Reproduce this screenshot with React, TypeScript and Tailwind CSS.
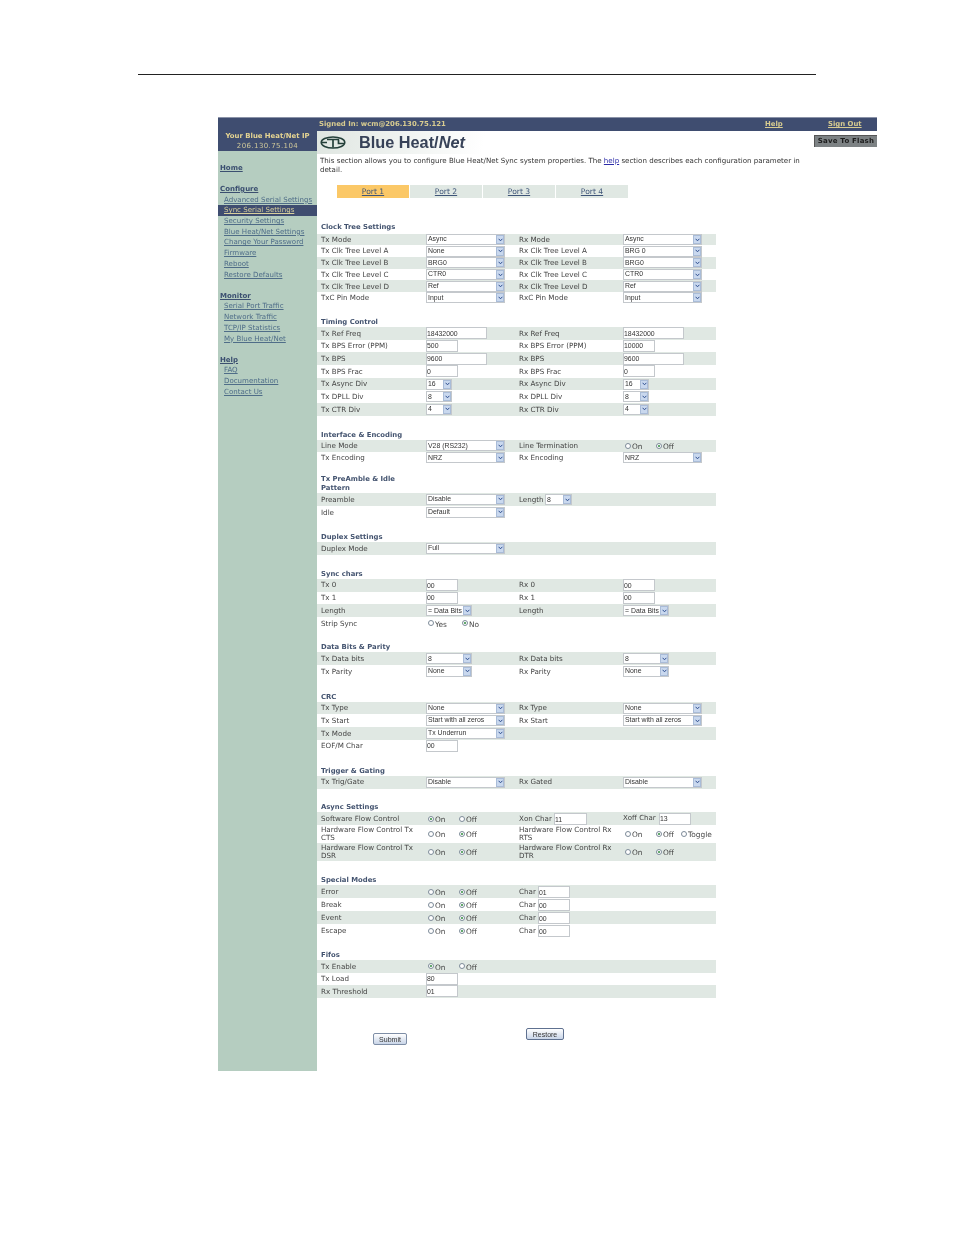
import React from 'react';

// form widgets drawn small, the page is a scanned manual
const Sel = ({ v, w = 'w-[79px]' }: { v: string; w?: string }) => (
  <div className={`${w} h-[11px] flex items-center justify-between bg-white border border-[#c4c8cc] pl-[1px] font-['Liberation_Sans',sans-serif] text-[6.9px] text-[#333] overflow-hidden shrink-0`}>
    <span className="whitespace-nowrap">{v}</span>
    <span className="w-[8px] h-[9px] shrink-0 bg-[#c9d8ee] border border-[#a9bcd8] flex items-center justify-center">
      <svg width="5" height="4" viewBox="0 0 5 4"><path d="M0.6 0.8 L2.5 2.8 L4.4 0.8" fill="none" stroke="#2f4f8f" strokeWidth="1" /></svg>
    </span>
  </div>
);

const Inp = ({ v, w = 'w-[32px]' }: { v: string; w?: string }) => (
  <input
    readOnly
    value={v}
    className={`${w} h-[12px] bg-white border border-[#c4c8cc] px-0 font-['Liberation_Sans',sans-serif] text-[6.9px] text-[#333] outline-none shrink-0`}
  />
);

const Radio = ({ label, on, w = 'w-[31px]' }: { label: string; on?: boolean; w?: string }) => (
  <span className={`${w} flex items-center shrink-0 pl-[2px]`}>
    <span className="w-[6px] h-[6px] rounded-full border border-[#7d8b99] bg-white flex items-center justify-center shrink-0">
      {on && <span className="w-[2px] h-[2px] rounded-full bg-[#2e8b3d]" />}
    </span>
    <span className="ml-[1px] mt-[2px] text-[7.4px] leading-none text-[#444]">{label}</span>
  </span>
);

const OnOff = ({ on }: { on?: boolean }) => (
  <div className="flex">
    <Radio label="On" on={on} />
    <Radio label="Off" on={!on} />
  </div>
);

type Cell = React.ReactNode;
type RowDef = [Cell, Cell?, Cell?, Cell?];

const Row = ({ r, shade, h }: { r: RowDef; shade: boolean; h: string }) => (
  <div className={`flex items-center w-[399px] ${h} ${shade ? 'bg-[#e0e8e3]' : ''}`}>
    <div className="w-[109px] pl-[4px] pr-[2px] pt-[1px] leading-[8.5px] shrink-0 text-[7.15px]">{r[0]}</div>
    <div className="w-[93px] shrink-0">{r[1]}</div>
    <div className="w-[104px] pr-[2px] pt-[1px] leading-[8.5px] shrink-0 text-[7.15px]">{r[2]}</div>
    <div className="flex-1">{r[3]}</div>
  </div>
);

const Section = ({ title, head, pb = 'pb-0', rows, hs }: { title: string; head: string; pb?: string; rows: RowDef[]; hs: string[] }) => (
  <div>
    <div className={`${head} ${pb} flex items-end pl-[4px]`}>
      <div className="w-[100px] font-bold text-[6.85px] leading-[9px] text-[#43536f]">{title}</div>
    </div>
    {rows.map((r, i) => (
      <Row key={i} r={r} shade={i % 2 === 0} h={hs[i] || hs[0]} />
    ))}
  </div>
);

const Tiny = ({ label, children, gap }: { label: string; children: React.ReactNode; gap: string }) => (
  <div className="flex items-center">
    <span className={gap}>{label}</span>
    {children}
  </div>
);

const navGroups = [
  { head: 'Home', items: [] as string[] },
  { head: 'Configure', items: ['Advanced Serial Settings', 'Sync Serial Settings', 'Security Settings', 'Blue Heat/Net Settings', 'Change Your Password', 'Firmware', 'Reboot', 'Restore Defaults'] },
  { head: 'Monitor', items: ['Serial Port Traffic', 'Network Traffic', 'TCP/IP Statistics', 'My Blue Heat/Net'] },
  { head: 'Help', items: ['FAQ', 'Documentation', 'Contact Us'] },
];

function Sidebar() {
  return (
    <div className="w-[99px] shrink-0 bg-[#b5cdc0] h-[940px]">
      <div className="h-[20px] bg-[#3f4d70] text-center">
        <div className="text-[6.9px] leading-[10px] font-bold text-[#e6d592] whitespace-nowrap">Your Blue Heat/Net IP</div>
        <div className="text-[7px] leading-[9px] tracking-[0.4px] text-[#cfc89a] pt-[1px]">206.130.75.104</div>
      </div>
      <div className="pt-[1.2px]">
        {navGroups.map((g) => (
          <div key={g.head} className="mt-[10.5px]">
            <div className="pl-[2px] text-[7px] leading-[10.7px] font-bold underline text-[#3b4f70]">{g.head}</div>
            {g.items.map((it) => (
              <div
                key={it}
                className={`pl-[6px] text-[7.05px] leading-[10.7px] underline whitespace-nowrap ${it === 'Sync Serial Settings' ? 'bg-[#3f4d70] text-[#d8cf9c]' : 'text-[#4f6d88]'}`}
              >
                {it}
              </div>
            ))}
          </div>
        ))}
      </div>
    </div>
  );
}

const Logo = () => (
  <svg width="26" height="13" viewBox="0 0 26 13" className="shrink-0">
    <ellipse cx="13" cy="6.5" rx="11.8" ry="5.6" fill="none" stroke="#24403a" strokeWidth="1.5" />
    <path d="M1.5 6.5 H7 M7 3.5 H19 M13 3.5 V11.5 M18.5 3.5 V7.5 H24.5" fill="none" stroke="#24403a" strokeWidth="1.7" />
  </svg>
);

const ports = ['Port 1', 'Port 2', 'Port 3', 'Port 4'];

export default function App() {
  const mid = 'w-[46px]';
  const tiny = 'w-[26px]';
  const wide = 'w-[61px]';
  return (
    <div className="h-[1235px] bg-white font-['DejaVu_Sans',sans-serif] text-[7px] text-[#444] blur-[0.3px]">
      <div className="pt-[74px] pl-[138px]">
        <div className="w-[678px] border-t border-[#222]" />
      </div>

      <div className="ml-[218px] mt-[42px] w-[659px]">
        {/* top bar */}
        <div className="h-[14px] bg-[#3f4d70] border-t border-[#8b93a8] flex items-center font-bold text-[6.9px] text-[#d8cc90]">
          <span className="ml-[101px] w-[446px]">Signed In: wcm@206.130.75.121</span>
          <span className="underline w-[63px]">Help</span>
          <span className="underline">Sign Out</span>
        </div>

        <div className="flex">
          <Sidebar />
          <div className="flex-1">
            {/* title */}
            <div className="h-[23px] flex items-center pl-[3px] bg-[linear-gradient(100deg,#dfe6e1_0%,#ffffff_30%)] relative">
              <Logo />
              <span className="ml-[13px] font-['Liberation_Sans',sans-serif] font-bold text-[16.3px] leading-none text-[#374258] whitespace-nowrap">
                Blue Heat/<span className="italic">Net</span>
              </span>
              <div className="absolute right-0 top-[4px] w-[63px] h-[12px] bg-[#7d8284] border-t border-l border-[#555] flex items-center justify-center font-bold text-[7px] tracking-[0.2px] text-[#1d1d1d] whitespace-nowrap">
                Save To Flash
              </div>
            </div>

            <p className="ml-[3px] mt-[1.5px] w-[490px] text-[7.09px] leading-[9px] text-[#333]">
              This section allows you to configure Blue Heat/Net Sync system properties. The <span className="underline text-[#2b2ba8]">help</span> section describes each configuration parameter in detail.
            </p>

            <div className="ml-[20px] mt-[11.5px] flex gap-px">
              {ports.map((p, i) => (
                <div key={p} className={`w-[72px] h-[13px] pt-[1px] flex items-center justify-center underline text-[7.6px] text-[#3f5578] ${i === 0 ? 'bg-[#fbc867]' : 'bg-[#e0e8e3]'}`}>
                  {p}
                </div>
              ))}
            </div>

            <Section
              title="Clock Tree Settings"
              head="h-[35.7px]"
              pb="pb-[1.5px]"
              hs={['h-[11.7px]']}
              rows={[
                ['Tx Mode', <Sel v="Async" />, 'Rx Mode', <Sel v="Async" />],
                ['Tx Clk Tree Level A', <Sel v="None" />, 'Rx Clk Tree Level A', <Sel v="BRG 0" />],
                ['Tx Clk Tree Level B', <Sel v="BRG0" />, 'Rx Clk Tree Level B', <Sel v="BRG0" />],
                ['Tx Clk Tree Level C', <Sel v="CTR0" />, 'Rx Clk Tree Level C', <Sel v="CTR0" />],
                ['Tx Clk Tree Level D', <Sel v="Ref" />, 'Rx Clk Tree Level D', <Sel v="Ref" />],
                ['TxC Pin Mode', <Sel v="Input" />, 'RxC Pin Mode', <Sel v="Input" />],
              ]}
            />
            <Section
              title="Timing Control"
              head="h-[23.1px]"
              hs={['h-[12.7px]']}
              rows={[
                ['Tx Ref Freq', <Inp v="18432000" w={wide} />, 'Rx Ref Freq', <Inp v="18432000" w={wide} />],
                ['Tx BPS Error (PPM)', <Inp v="500" />, 'Rx BPS Error (PPM)', <Inp v="10000" />],
                ['Tx BPS', <Inp v="9600" w={wide} />, 'Rx BPS', <Inp v="9600" w={wide} />],
                ['Tx BPS Frac', <Inp v="0" />, 'Rx BPS Frac', <Inp v="0" />],
                ['Tx Async Div', <Sel v="16" w={tiny} />, 'Rx Async Div', <Sel v="16" w={tiny} />],
                ['Tx DPLL Div', <Sel v="8" w={tiny} />, 'Rx DPLL Div', <Sel v="8" w={tiny} />],
                ['Tx CTR Div', <Sel v="4" w={tiny} />, 'Rx CTR Div', <Sel v="4" w={tiny} />],
              ]}
            />
            <Section
              title="Interface & Encoding"
              head="h-[24.1px]"
              hs={['h-[12px]']}
              rows={[
                ['Line Mode', <Sel v="V28 (RS232)" />, 'Line Termination', <OnOff />],
                ['Tx Encoding', <Sel v="NRZ" />, 'Rx Encoding', <Sel v="NRZ" />],
              ]}
            />
            <Section
              title="Tx PreAmble & Idle Pattern"
              head="h-[29px]"
              hs={['h-[13px]']}
              rows={[
                ['Preamble', <Sel v="Disable" />, <Tiny label="Length" gap="w-[26px]"><Sel v="8" w="w-[27px]" /></Tiny>],
                ['Idle', <Sel v="Default" />],
              ]}
            />
            <Section title="Duplex Settings" head="h-[23.3px]" hs={['h-[12.7px]']} rows={[['Duplex Mode', <Sel v="Full" />]]} />
            <Section
              title="Sync chars"
              head="h-[24px]"
              hs={['h-[12.75px]']}
              rows={[
                ['Tx 0', <Inp v="00" />, 'Rx 0', <Inp v="00" />],
                ['Tx 1', <Inp v="00" />, 'Rx 1', <Inp v="00" />],
                ['Length', <Sel v="= Data Bits" w={mid} />, 'Length', <Sel v="= Data Bits" w={mid} />],
                [
                  'Strip Sync',
                  <div className="flex">
                    <Radio label="Yes" w="w-[34px]" />
                    <Radio label="No" on />
                  </div>,
                ],
              ]}
            />
            <Section
              title="Data Bits & Parity"
              head="h-[22.7px]"
              hs={['h-[12.65px]']}
              rows={[
                ['Tx Data bits', <Sel v="8" w={mid} />, 'Rx Data bits', <Sel v="8" w={mid} />],
                ['Tx Parity', <Sel v="None" w={mid} />, 'Rx Parity', <Sel v="None" w={mid} />],
              ]}
            />
            <Section
              title="CRC"
              head="h-[24px]"
              hs={['h-[12.6px]']}
              rows={[
                ['Tx Type', <Sel v="None" />, 'Rx Type', <Sel v="None" />],
                ['Tx Start', <Sel v="Start with all zeros" />, 'Rx Start', <Sel v="Start with all zeros" />],
                ['Tx Mode', <Sel v="Tx Underrun" />],
                ['EOF/M Char', <Inp v="00" />],
              ]}
            />
            <Section title="Trigger & Gating" head="h-[23.6px]" hs={['h-[13px]']} rows={[['Tx Trig/Gate', <Sel v="Disable" />, 'Rx Gated', <Sel v="Disable" />]]} />
            <Section
              title="Async Settings"
              head="h-[23.7px]"
              hs={['h-[12.3px]', 'h-[18px]', 'h-[18.3px]']}
              rows={[
                [
                  'Software Flow Control',
                  <OnOff on />,
                  <Tiny label="Xon Char" gap="w-[35px]"><Inp v="11" w="w-[33px]" /></Tiny>,
                  <Tiny label="Xoff Char" gap="w-[36px]"><Inp v="13" w="w-[32px]" /></Tiny>,
                ],
                [
                  'Hardware Flow Control Tx CTS',
                  <OnOff />,
                  'Hardware Flow Control Rx RTS',
                  <div className="flex">
                    <Radio label="On" />
                    <Radio label="Off" on w="w-[25px]" />
                    <Radio label="Toggle" />
                  </div>,
                ],
                ['Hardware Flow Control Tx DSR', <OnOff />, 'Hardware Flow Control Rx DTR', <OnOff />],
              ]}
            />
            <Section
              title="Special Modes"
              head="h-[24px]"
              hs={['h-[13px]']}
              rows={['Error', 'Break', 'Event', 'Escape'].map((l, i): RowDef => [
                l,
                <OnOff />,
                <Tiny label="Char" gap="w-[19px]"><Inp v={i === 0 ? '01' : '00'} /></Tiny>,
              ])}
            />
            <Section
              title="Fifos"
              head="h-[23px]"
              hs={['h-[12.5px]']}
              rows={[
                ['Tx Enable', <OnOff on />],
                ['Tx Load', <Inp v="80" />],
                ['Rx Threshold', <Inp v="01" />],
              ]}
            />

            <div className="flex items-start">
              <button className="ml-[56px] mt-[35.5px] w-[34px] h-[12px] rounded-[2px] border border-[#7e8ea6] bg-[linear-gradient(#ffffff,#c9d5e8)] font-['Liberation_Sans',sans-serif] text-[7px] leading-none text-[#333]">
                Submit
              </button>
              <button className="ml-[119px] mt-[30.5px] w-[38px] h-[12px] rounded-[2px] border border-[#5f7190] bg-[linear-gradient(#ffffff,#c9d5e8)] font-['Liberation_Sans',sans-serif] text-[7px] leading-none text-[#333]">
                Restore
              </button>
            </div>
          </div>
        </div>
      </div>
    </div>
  );
}
